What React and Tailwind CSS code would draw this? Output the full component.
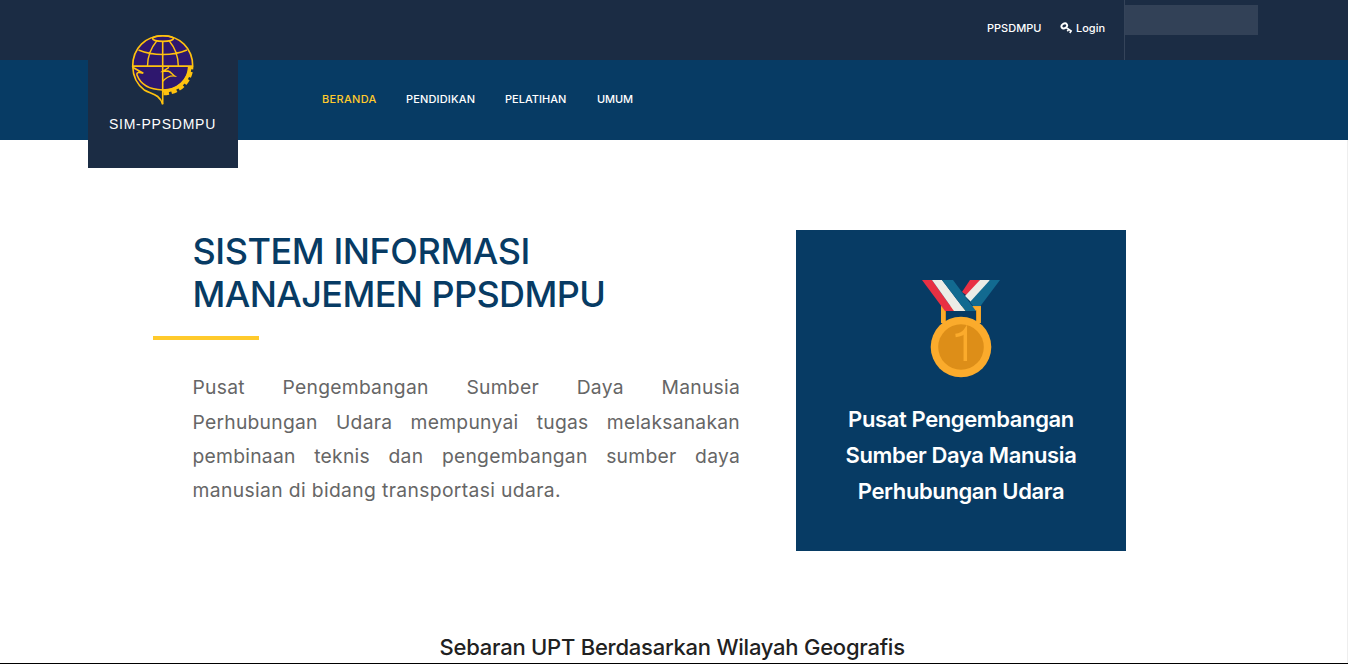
function Emblem() {
  return (
    <svg width="64" height="72" viewBox="0 0 64 72" fill="none" stroke="#ffc20e" strokeWidth="1.6">
      <path d="M1.700 32.300C1.700 14 15 1.800 31.700 1.800S61.700 14 61.700 32.300Z" fill="#2e176e" />
      <path d="M1.700 32.300C2 43 7 51 15 53.500C21 56 27 56.500 31.700 56C46 56 57.700 46 57.700 32.300Z" fill="#2e176e" stroke="none" />
      <path d="M31.700 58.500C48 59 60.300 47 60.500 32.300H57.200C57.200 46 46 55.500 31.700 55.800Z" fill="#ffc20e" stroke="none" />
      <path d="M32.500 59.500C48 59.500 60 48 60.700 33" strokeWidth="3.400" strokeDasharray="5.500 2.600" />
      <path d="M1.700 32.300C2 44 7 51.500 13.700 56.300C20 60 29 60 31.700 70.500M57.700 32.300C57.700 46 46 56 31.700 56" />
      <path d="M1.700 32.300H61.700M31.700 7V70" />
      <ellipse cx="32" cy="4.600" rx="10.500" ry="2.800" />
      <path d="M25.700 7C19 15 16.500 22 16.500 32M38.300 7C45 15 47.300 22 47.300 32M7.500 16C22 22 42 22 56 16" strokeWidth="1.400" />
      <path d="M2 33.500L12.300 39.300C8 38 5.500 38 6 41C9 49 17 55.500 31.700 56" />
      <path d="M38 33.300L31.700 37.300L37 37C40 38 41 40 43.700 42C39 41.500 35 43.500 31.700 47.300" strokeWidth="1.400" />
    </svg>
  );
}

function Medal() {
  return (
    <svg className="block" width="78" height="98" viewBox="0 0 78 98">
      <path d="M21.500 43V28.500H56.500V43" fill="none" stroke="#dc8e19" strokeWidth="5" />
      <path d="M21 43V28.300H56.800V43" fill="none" stroke="#fbab2c" strokeWidth="4" />
      <path d="M48 0H58L47 17L40 12Z" fill="#e83043" />
      <path d="M58 0H68L52 25L43 16Z" fill="#ecece6" />
      <path d="M68 0H78L58.500 26H51L48 22Z" fill="#126a90" />
      <path d="M0 0H10L32 31H23Z" fill="#e83043" />
      <path d="M10 0H20L43.500 31H32Z" fill="#ecece6" />
      <path d="M20 0H31L54 31H43.500Z" fill="#126a90" />
      <circle cx="39" cy="67" r="30.300" fill="#fbab2c" />
      <circle cx="39" cy="67" r="22.800" fill="#dd8e18" />
      <path d="M33.500 55.500C38 55 41 54 43.300 50.500V81" fill="none" stroke="#fbab2c" strokeWidth="3.500" />
    </svg>
  );
}

function KeyIcon() {
  return (
    <svg className="mr-[3px]" width="13" height="12" viewBox="0 0 13 12" fill="none" stroke="white">
      <ellipse cx="4.300" cy="3.900" rx="3" ry="2.300" transform="rotate(-35 4.300 3.900)" strokeWidth="1.900" />
      <path d="M6.300 5.600L11.800 9.500M8.800 7.200L7.300 9.300M11.200 8.700L9.800 11" strokeWidth="1.600" />
    </svg>
  );
}

export default function App() {
  return (
    <div className="relative h-[664px] w-[1348px] overflow-hidden border-b border-black bg-white font-['Inter',sans-serif]">
      <header>
        <div className="flex h-[60px] bg-[#1b2c44] text-[11px] font-medium text-white">
          <div className="flex h-[56px] w-[1124px] items-center justify-end pr-[18px]">
            <a className="mr-[18px] w-[55px] whitespace-nowrap">PPSDMPU</a>
            <a className="flex items-center whitespace-nowrap"><KeyIcon /><span className="w-[30px]">Login</span></a>
          </div>
          <div className="h-[60px] border-l border-[#35445a] pt-[5px]">
            <div className="h-[30px] w-[133px] bg-[#324157]" />
          </div>
        </div>
        <nav className="flex h-20 items-center bg-[#073b64] pb-[2px] pl-[322px] text-[11px] font-medium whitespace-nowrap text-white">
          <a className="w-[84px] tracking-[0.32px] text-[#ffca2c]">BERANDA</a>
          <a className="w-[99px] tracking-[0.16px]">PENDIDIKAN</a>
          <a className="w-[92px]">PELATIHAN</a>
          <a className="tracking-[-0.1px]">UMUM</a>
        </nav>
        <div className="absolute top-[34px] left-[88px] flex h-[134px] w-[150px] flex-col items-center bg-[#1b2c44]">
          <Emblem />
          <div className="mt-[8px] -ml-px font-['Liberation_Sans',sans-serif] text-[14px] leading-[20px] tracking-[0.76px] whitespace-nowrap text-white">SIM-PPSDMPU</div>
        </div>
      </header>

      <main className="pt-[90px]">
        <div className="flex h-[321px] pl-[153px]">
          <section className="w-[643px]">
            <h1 className="ml-[39.500px] text-[36px] leading-[43px] font-medium whitespace-nowrap text-[#073b64]">
              <span className="block tracking-[-0.44px]">SISTEM INFORMASI</span>
              <span className="block tracking-[-0.6px]">MANAJEMEN PPSDMPU</span>
            </h1>
            <div className="mt-[20px] h-1 w-[106px] bg-[#ffca2c]" />
            <p className="mt-[30.400px] ml-[39.500px] w-[547.500px] text-[19.300px] leading-[34.300px] tracking-[0.25px] whitespace-nowrap text-[#666]">
              <span className="block [text-align-last:justify]">Pusat Pengembangan Sumber Daya Manusia</span>
              <span className="block [text-align-last:justify]">Perhubungan Udara mempunyai tugas melaksanakan</span>
              <span className="block [text-align-last:justify]">pembinaan teknis dan pengembangan sumber daya</span>
              <span className="block tracking-[0.36px]">manusian di bidang transportasi udara.</span>
            </p>
          </section>
          <aside className="flex w-[330px] flex-col items-center bg-[#073b64] pt-[50px] text-white">
            <Medal />
            <h2 className="mt-[23px] text-center text-[22px] leading-[36px] font-semibold tracking-[-0.38px] whitespace-nowrap">
              <span className="block">Pusat Pengembangan</span>
              <span className="block">Sumber Daya Manusia</span>
              <span className="block">Perhubungan Udara</span>
            </h2>
          </aside>
        </div>
        <h2 className="mt-[80px] pl-[439.500px] text-[22px] leading-[32px] font-medium tracking-[-0.24px] whitespace-nowrap text-[#212121]">Sebaran UPT Berdasarkan Wilayah Geografis</h2>
      </main>
      <div className="absolute top-[140px] right-0 h-[523px] w-px bg-[#eeeeee]" />
    </div>
  );
}
